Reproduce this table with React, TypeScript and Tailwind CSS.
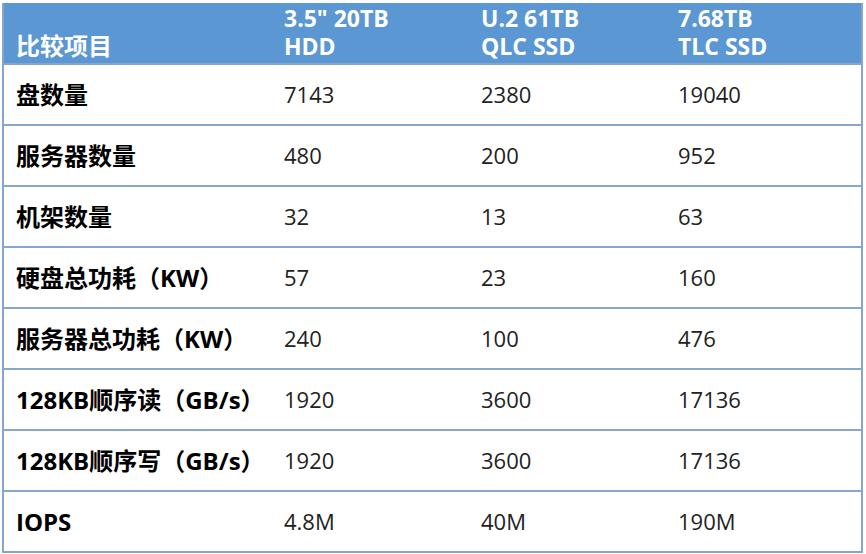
import React from "react"

type Row = {
  label: string
  hdd: string
  qlc: string
  tlc: string
}

const rows: Row[] = [
  { label: "盘数量", hdd: "7143", qlc: "2380", tlc: "19040" },
  { label: "服务器数量", hdd: "480", qlc: "200", tlc: "952" },
  { label: "机架数量", hdd: "32", qlc: "13", tlc: "63" },
  { label: "硬盘总功耗（KW）", hdd: "57", qlc: "23", tlc: "160" },
  { label: "服务器总功耗（KW）", hdd: "240", qlc: "100", tlc: "476" },
  { label: "128KB顺序读（GB/s）", hdd: "1920", qlc: "3600", tlc: "17136" },
  { label: "128KB顺序写（GB/s）", hdd: "1920", qlc: "3600", tlc: "17136" },
  { label: "IOPS", hdd: "4.8M", qlc: "40M", tlc: "190M" },
]

const font = "font-['Open_Sans','Noto_Sans_CJK_SC',sans-serif]"

export default function App() {
  return (
    <div className={`w-[866px] h-[554px] bg-white pl-[2px] pt-[3px] ${font}`}>
      <div className="w-[861px] border-x-2 border-b-2 border-[#86a6cc]">

        {/* HEADER */}
        <div className="grid grid-cols-[268px_197px_197px_1fr] h-[60px] bg-[#5a97d3] text-white font-bold text-[23px] leading-[28px]">
          <div className="flex items-end pl-[12px] pb-[3px] text-[24px]">比较项目</div>
          <div className="flex flex-col justify-end pl-[12px] pb-[3px]">
            <span>3.5" 20TB</span>
            <span>HDD</span>
          </div>
          <div className="flex flex-col justify-end pl-[12px] pb-[3px]">
            <span>U.2 61TB</span>
            <span>QLC SSD</span>
          </div>
          <div className="flex flex-col justify-end pl-[12px] pb-[3px]">
            <span>7.68TB</span>
            <span>TLC SSD</span>
          </div>
        </div>

        {/* BODY */}
        {rows.map((r, i) => (
          <div
            key={i}
            className="grid grid-cols-[268px_197px_197px_1fr] h-[61px] border-t-2 border-[#86a6cc] items-center text-[22px] text-[#222]"
          >
            <div className="pl-[12px] font-bold text-black text-[24px]">{r.label}</div>
            <div className="pl-[12px]">{r.hdd}</div>
            <div className="pl-[12px]">{r.qlc}</div>
            <div className="pl-[12px]">{r.tlc}</div>
          </div>
        ))}

      </div>
    </div>
  )
}
